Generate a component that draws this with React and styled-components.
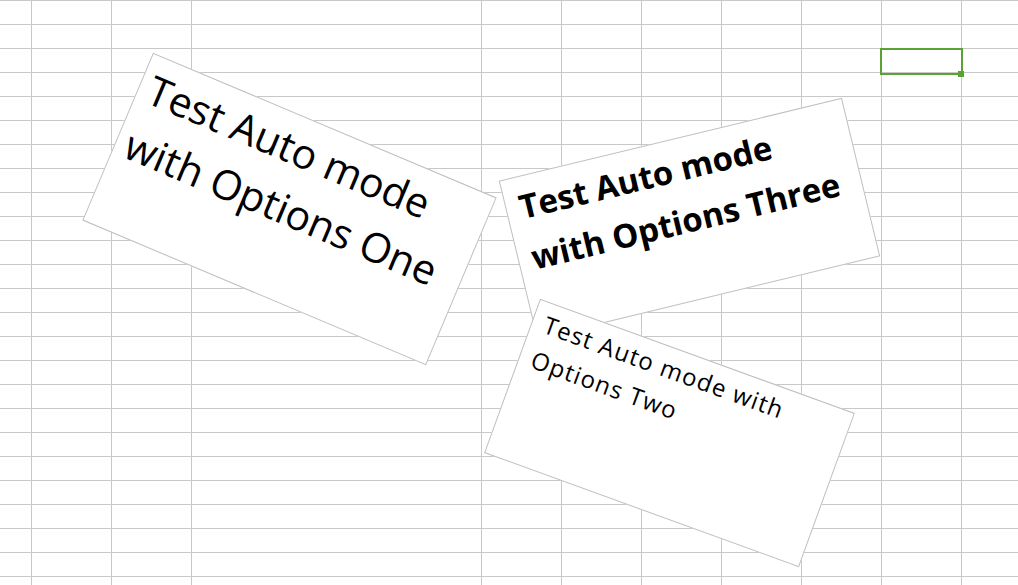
import React from 'react';
import styled, { createGlobalStyle } from 'styled-components';

const GlobalStyle = createGlobalStyle`
  html, body {
    margin: 0;
    padding: 0;
    background: #ffffff;
    overflow: hidden;
  }
`;

const COLUMNS = [32, 80, 80, 290, 80, 80, 80, 80, 80, 80, 80];
const ROWS = 25;

const Sheet = styled.div`
  position: relative;
  width: 1018px;
  height: 585px;
  overflow: hidden;
  background: #ffffff;
  border-top: 1px solid #c8c8c8;
  box-sizing: border-box;
`;

const Grid = styled.div`
  display: grid;
  grid-template-columns: ${COLUMNS.map((c) => `${c}px`).join(' ')};
  grid-auto-rows: 24px;
  width: max-content;
`;

const Cell = styled.div`
  box-sizing: border-box;
  border-right: 1px solid #c8c8c8;
  border-bottom: 1px solid #c8c8c8;
`;

/* active cell frame, sits over the grid */
const Selection = styled.div`
  position: absolute;
  left: 880px;
  top: 47px;
  width: 83px;
  height: 27px;
  box-sizing: border-box;
  border: 2px solid #5aa232;
`;

const FillHandle = styled.div`
  position: absolute;
  right: -3px;
  bottom: -4px;
  width: 6px;
  height: 6px;
  background: #5aa232;
`;

/* text box shapes floating on the sheet */
const Shape = styled.div`
  position: absolute;
  left: ${(p) => p.$cx - p.$w / 2}px;
  top: ${(p) => p.$cy - p.$h / 2}px;
  width: ${(p) => p.$w}px;
  height: ${(p) => p.$h}px;
  box-sizing: border-box;
  background: #ffffff;
  border: 1px solid #bfbfbf;
  transform: rotate(${(p) => p.$rot}deg);
  transform-origin: center;
  padding: ${(p) => p.$pad};
`;

const ShapeText = styled.div`
  font-family: 'Open Sans', 'Noto Sans', sans-serif;
  font-size: ${(p) => p.$size}px;
  font-weight: ${(p) => (p.$bold ? 700 : 400)};
  line-height: ${(p) => p.$lh}px;
  letter-spacing: ${(p) => p.$ls || 0}px;
  color: #000000;
  white-space: nowrap;
`;

const shapes = [
  {
    id: 'one',
    cx: 289,
    cy: 207.5,
    w: 373,
    h: 182,
    rot: 22.86,
    pad: '3px 10px',
    size: 41,
    lh: 59,
    lines: ['Test Auto mode', 'with Options One'],
  },
  {
    id: 'three',
    cx: 689.2,
    cy: 217.5,
    w: 353,
    h: 163,
    rot: -13.6,
    pad: '4px 13px',
    size: 33,
    lh: 52,
    bold: true,
    lines: ['Test Auto mode', 'with Options Three'],
  },
  {
    id: 'two',
    cx: 669.2,
    cy: 431.7,
    w: 335,
    h: 164,
    rot: 19.96,
    pad: '2px 12px',
    size: 24,
    lh: 37,
    ls: 1.2,
    lines: ['Test Auto mode with', 'Options Two'],
  },
];

const App = () => {
  return (
    <>
      <GlobalStyle />
      <Sheet>
        <Grid>
          {Array.from({ length: ROWS * COLUMNS.length }, (_, i) => (
            <Cell key={i} />
          ))}
        </Grid>

        <Selection>
          <FillHandle />
        </Selection>

        {shapes.map((s) => (
          <Shape key={s.id} $cx={s.cx} $cy={s.cy} $w={s.w} $h={s.h} $rot={s.rot} $pad={s.pad}>
            <ShapeText $size={s.size} $lh={s.lh} $bold={s.bold} $ls={s.ls}>
              {s.lines.map((line) => (
                <div key={line}>{line}</div>
              ))}
            </ShapeText>
          </Shape>
        ))}
      </Sheet>
    </>
  );
};

export default App;
